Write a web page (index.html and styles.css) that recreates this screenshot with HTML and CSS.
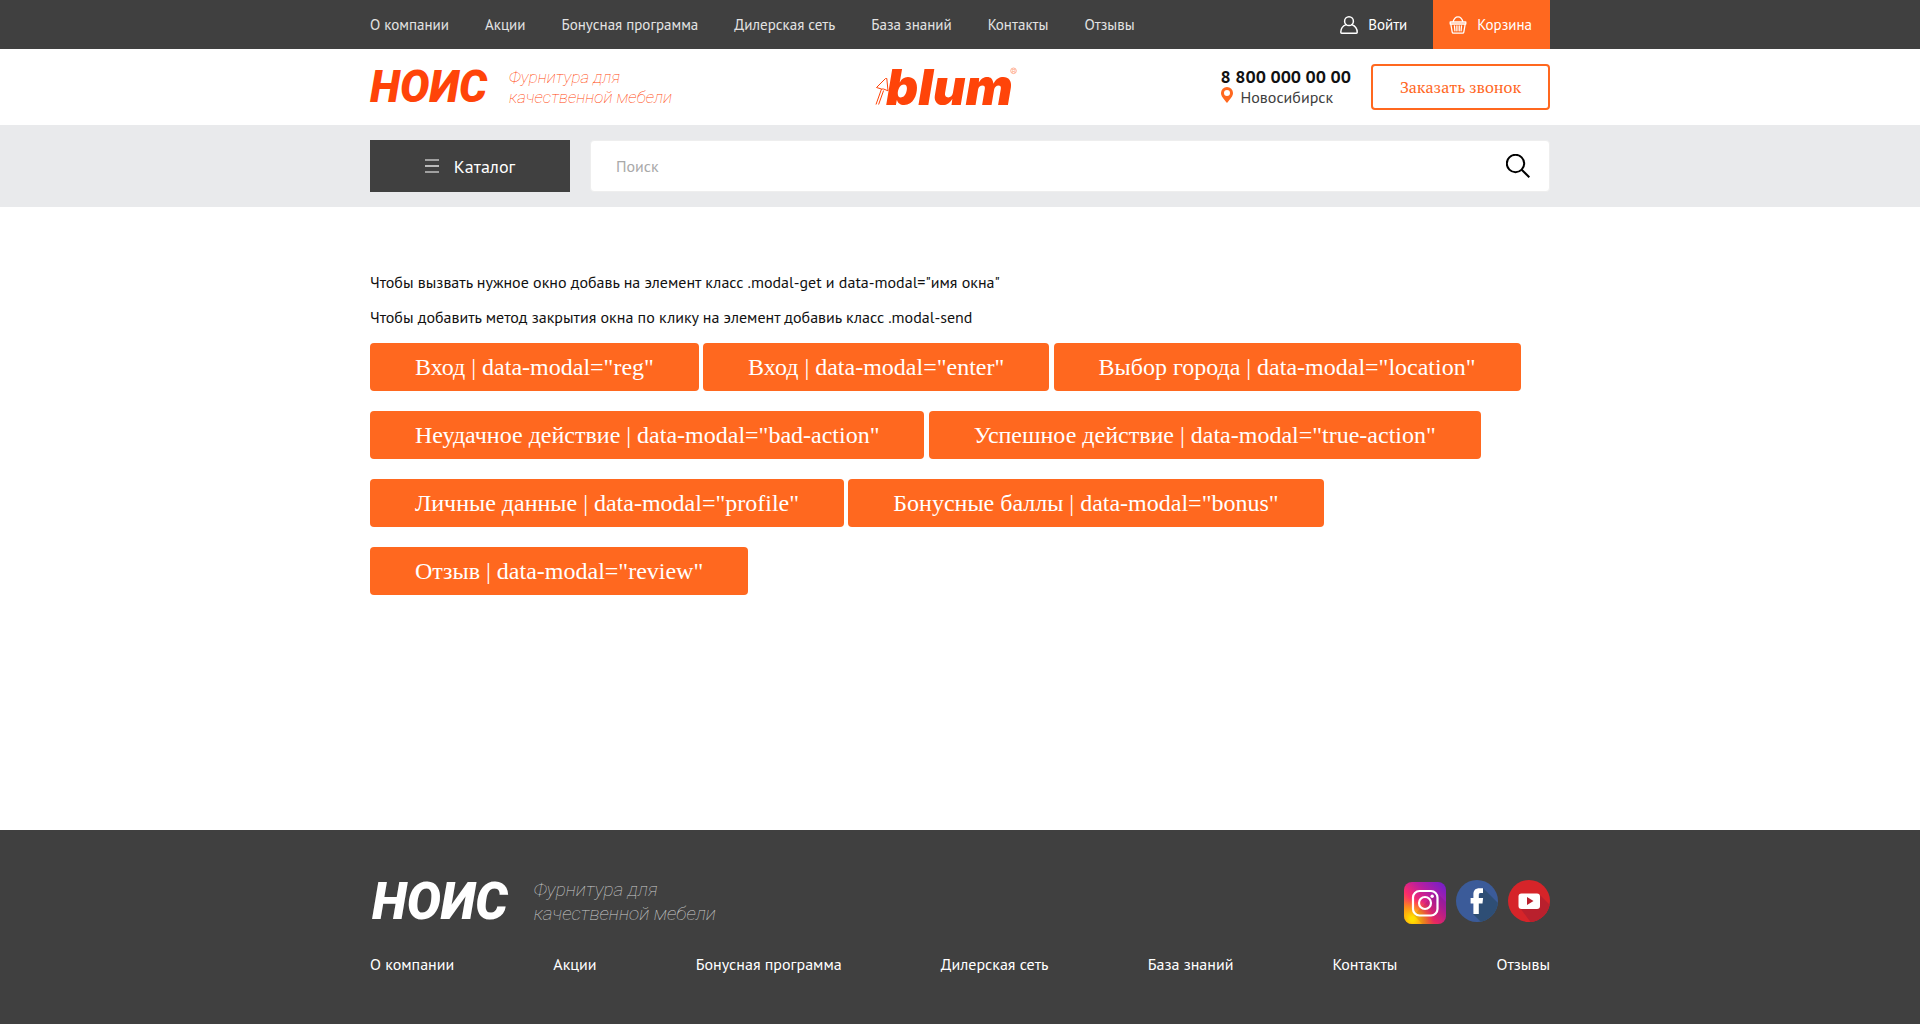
FILE: index.html
```html
<!DOCTYPE html>
<html lang="ru">
<head>
<meta charset="utf-8">
<title>НОИС — Фурнитура для качественной мебели</title>
<link rel="stylesheet" href="styles.css">
</head>
<body>
<header>
  <div class="topbar">
    <div class="container topbar-row">
      <nav class="top-nav">
        <a href="#">О компании</a>
        <a href="#">Акции</a>
        <a href="#">Бонусная программа</a>
        <a href="#">Дилерская сеть</a>
        <a href="#">База знаний</a>
        <a href="#">Контакты</a>
        <a href="#">Отзывы</a>
      </nav>
      <div class="user-links">
        <a class="login" href="#">
          <svg width="18" height="18" viewBox="0 0 18 18" fill="none" stroke="#fff" stroke-width="1.5" stroke-linecap="round" stroke-linejoin="round"><circle cx="9" cy="5.2" r="4.4"/><path d="M6.2 8.6C3 9.8.8 12.700.8 16v.3c0 .5.3.9.9.9h14.600c.5 0 .9-.4.9-.9 0-3.500-2.200-6.500-5.400-7.700"/></svg>
          Войти
        </a>
        <a class="cart" href="#">
          <svg width="18" height="18" viewBox="0 0 18 18" fill="none" stroke="#fff" stroke-width="1.300" stroke-linecap="round" stroke-linejoin="round"><path d="M1.200 6h15.600v2H1.200zM1.800 8l1.400 8.200c.1.600.5 1 1.100 1h9.400c.6 0 1-.4 1.100-1L16.200 8M4 6c.8-3.200 2.600-5.200 5-5.200S13.200 2.800 14 6M5.500 10l.4 4.800M7.900 10v4.800M10.200 10v4.800M12.500 10l-.4 4.800"/></svg>
          Корзина
        </a>
      </div>
    </div>
  </div>

  <div class="container brand-row">
    <a class="logo" href="#">
      <span class="logo-name">НОИС</span>
      <span class="logo-text">Фурнитура для<br>качественной мебели</span>
    </a>
    <a class="blum" href="#">
      <svg width="142" height="68" viewBox="0 -14 142 68">
        <path d="M1 37.500 6.500 22M3.600 37.500 8.600 23.500M1.500 20.500 10.500 11.500h1.300L13 23.800 8.600 22 6.500 22z" fill="none" stroke="#ff4409" stroke-width="1"/>
        <text class="blum-name" x="11" y="38">blum</text>
        <circle cx="138.500" cy="3.800" r="2.800" fill="none" stroke="#ff9b78" stroke-width=".8"/>
        <text class="blum-mark" x="137" y="5.500">R</text>
      </svg>
    </a>
    <div class="contacts">
      <div class="contact-info">
        <a class="phone" href="tel:88000000000">8 800 000 00 00</a>
        <a class="city" href="#">
          <svg width="12" height="16" viewBox="0 0 12 16"><path fill="#ff681f" fill-rule="evenodd" d="M6 0a6 6 0 0 1 6 6c0 3.300-2.500 5.500-6 10C2.500 11.500 0 9.300 0 6a6 6 0 0 1 6-6zm0 2.900a3 3 0 1 0 0 6 3 3 0 0 0 0-6z"/></svg>
          Новосибирск
        </a>
      </div>
      <button class="call" type="button">Заказать звонок</button>
    </div>
  </div>

  <div class="search-band">
    <div class="container search-row">
      <button class="catalog" type="button">
        <svg width="14" height="14" viewBox="0 0 14 14"><path d="M0 1h14M0 13h14" stroke="#fff" stroke-width="1.200"/><path d="M0 7h14" stroke="#bbb" stroke-width="2"/></svg>
        Каталог
      </button>
      <form class="search">
        <input type="search" placeholder="Поиск" aria-label="Поиск">
        <button type="submit" aria-label="Найти">
          <svg width="24" height="24" viewBox="0 0 24 24" fill="none" stroke="#000" stroke-width="2"><circle cx="9.500" cy="9.500" r="8.700"/><path d="m15.700 15.700 7.600 7.600"/></svg>
        </button>
      </form>
    </div>
  </div>
</header>

<main class="container content">
  <p>Чтобы вызвать нужное окно добавь на элемент класс .modal-get и data-modal="имя окна"</p>
  <p>Чтобы добавить метод закрытия окна по клику на элемент добавиь класс .modal-send</p>
  <div class="modal-buttons">
    <button type="button" data-modal="reg">Вход | data-modal="reg"</button>
    <button type="button" data-modal="enter">Вход | data-modal="enter"</button>
    <button type="button" data-modal="location">Выбор города | data-modal="location"</button>
    <button type="button" data-modal="bad-action">Неудачное действие | data-modal="bad-action"</button>
    <button type="button" data-modal="true-action">Успешное действие | data-modal="true-action"</button>
    <button type="button" data-modal="profile">Личные данные | data-modal="profile"</button>
    <button type="button" data-modal="bonus">Бонусные баллы | data-modal="bonus"</button>
    <button type="button" data-modal="review">Отзыв | data-modal="review"</button>
  </div>
</main>

<footer class="footer">
  <div class="container">
    <div class="footer-row">
      <a class="logo logo-footer" href="#">
        <span class="logo-name">НОИС</span>
        <span class="logo-text">Фурнитура для<br>качественной мебели</span>
      </a>
      <div class="socials">
        <a class="instagram" href="#" aria-label="Instagram">
          <svg width="42" height="42" viewBox="0 0 42 42">
            <defs>
              <linearGradient id="ig-base" x1="0" y1="1" x2="1" y2="0"><stop offset=".15" stop-color="#ff8a1c"/><stop offset=".4" stop-color="#fb2a6c"/><stop offset=".65" stop-color="#b81fa0"/><stop offset="1" stop-color="#6b1fd0"/></linearGradient>
              <radialGradient id="ig-glow" cx=".2" cy=".88" r=".5"><stop offset=".1" stop-color="#ffe000"/><stop offset="1" stop-color="#ff9a00" stop-opacity="0"/></radialGradient>
            </defs>
            <rect width="42" height="42" rx="8" fill="url(#ig-base)"/>
            <rect width="42" height="42" rx="8" fill="url(#ig-glow)"/>
            <path d="m32 10 10 10v14a8 8 0 0 1-8 8H18l-8-9z" fill="#000" opacity=".08"/>
            <g fill="none" stroke="#fff" stroke-width="2.200"><rect x="9" y="9" width="24.500" height="24.500" rx="6.500"/><circle cx="21" cy="21" r="6"/></g>
            <circle cx="28.200" cy="14.200" r="1.700" fill="#fff"/>
          </svg>
        </a>
        <a href="#" aria-label="Facebook">
          <svg width="42" height="42" viewBox="0 0 42 42">
            <defs><clipPath id="disc"><circle cx="21" cy="21" r="21"/></clipPath></defs>
            <g clip-path="url(#disc)"><path fill="#3b5b99" d="M0 0h42v42H0z"/><path fill="#2e4e75" d="m27 8 20 20v20H31L17 34l4-13z"/></g>
            <path fill="#fff" d="M17.400 34V23.600H14.600V18h2.800v-3.600c0-4.200 2-6.200 6.200-6.200H27v4.900h-2.200c-1.500 0-2 .6-2 2V18h4.300l-.6 5.600h-3.700V34z"/>
          </svg>
        </a>
        <a href="#" aria-label="YouTube">
          <svg width="42" height="42" viewBox="0 0 42 42">
            <g clip-path="url(#disc)"><path fill="#d62429" d="M0 0h42v42H0z"/><path fill="#b9202d" d="m31 14 14 14v20H27L12 28z"/></g>
            <rect x="10.500" y="13.500" width="21.500" height="15.500" rx="3" fill="#fff"/>
            <path fill="#b9202d" d="m19 17 6.500 4L19 25z"/>
          </svg>
        </a>
      </div>
    </div>
    <nav class="footer-nav">
      <a href="#">О компании</a>
      <a href="#">Акции</a>
      <a href="#">Бонусная программа</a>
      <a href="#">Дилерская сеть</a>
      <a href="#">База знаний</a>
      <a href="#">Контакты</a>
      <a href="#">Отзывы</a>
    </nav>
  </div>
</footer>
</body>
</html>
```

FILE: styles.css
```css
* {
  box-sizing: border-box;
}

body {
  display: flex;
  flex-direction: column;
  min-height: 100vh;
  margin: 0;
  background: #fff;
  color: #111;
  font-family: "PT Sans", "Noto Sans", sans-serif;
  font-size: 16px;
  line-height: 20px;
}

a {
  color: inherit;
  text-decoration: none;
}

button {
  border: 0;
  cursor: pointer;
  font-family: inherit;
}

svg {
  display: block;
  flex: none;
}

.container {
  width: 100%;
  max-width: 1180px;
  margin: 0 auto;
}

.topbar {
  background: #404040;
  color: #e3e3e3;
  font-size: 15px;
}

.topbar-row {
  display: flex;
  justify-content: space-between;
  height: 49px;
}

.top-nav {
  display: flex;
  align-items: center;
  gap: 36px;
}

.user-links {
  display: flex;
  gap: 26px;
  color: #fff;
}

.login,
.cart {
  display: flex;
  align-items: center;
  gap: 10px;
}

.cart {
  padding: 0 18px 0 16px;
  background: #ff681f;
}

.brand-row {
  display: flex;
  justify-content: space-between;
  align-items: center;
  height: 76px;
}

.logo {
  display: flex;
  align-items: center;
  gap: 22px;
  color: #ff4409;
  font-family: Roboto, sans-serif;
  font-style: italic;
}

.logo-name {
  font-size: 44px;
  font-weight: 900;
  line-height: 48px;
}

.logo-text {
  font-size: 17px;
  font-weight: 100;
  line-height: 20px;
}

.blum-name {
  fill: #ff4409;
  font: italic 900 50px Inter, sans-serif;
}

.blum-mark {
  fill: #ff9b78;
  font: 5px "Liberation Sans", sans-serif;
}

.contacts {
  display: flex;
  align-items: center;
  gap: 20px;
}

.contact-info {
  display: flex;
  flex-direction: column;
}

.phone {
  font-size: 18px;
  font-weight: 700;
}

.city {
  display: flex;
  gap: 8px;
  color: #404040;
}

.call {
  width: 179px;
  height: 46px;
  border: 2px solid #ff681f;
  border-radius: 4px;
  background: #fff;
  color: #ff681f;
  font-family: "PT Serif", "Liberation Serif", serif;
  font-size: 16px;
}

.search-band {
  padding: 15px 0;
  background: #e9eaec;
}

.search-row {
  display: flex;
  gap: 20px;
  height: 52px;
}

.catalog {
  display: flex;
  align-items: center;
  justify-content: center;
  gap: 15px;
  width: 200px;
  background: #404040;
  color: #fff;
  font-size: 18px;
}

.search {
  display: flex;
  flex: 1;
  border: 1px solid #eee;
  border-radius: 4px;
  background: #fff;
}

.search input {
  flex: 1;
  padding: 0 25px;
  border: 0;
  background: none;
  font-family: inherit;
  font-size: 16px;
}

.search input::placeholder {
  color: #a9a9a9;
}

.search button {
  padding: 0 19px;
  background: none;
}

.content {
  flex: 1;
  padding: 65px 0;
}

.content p {
  margin: 0 0 15px;
  line-height: 20px;
}

.modal-buttons {
  padding-top: 1px;
}

.modal-buttons button {
  height: 48px;
  margin-bottom: 20px;
  padding: 0 45px;
  border-radius: 4px;
  background: #ff681f;
  color: #fff;
  font-family: "Liberation Serif", serif;
  font-size: 24px;
  vertical-align: top;
}

.footer {
  padding: 48px 0 50px;
  background: #404040;
  color: #fff;
}

.footer-row {
  display: flex;
  justify-content: space-between;
  align-items: flex-start;
  margin-bottom: 28px;
}

.logo-footer {
  gap: 26px;
  padding-left: 2px;
  color: #fff;
}

.logo-footer .logo-name {
  font-size: 51px;
}

.logo-footer .logo-text {
  color: #ccc;
  font-size: 19px;
  line-height: 24px;
}

.socials {
  display: flex;
  gap: 10px;
  padding-top: 2px;
}

.instagram {
  margin-top: 2px;
}

.footer-nav {
  display: flex;
  justify-content: space-between;
}
```
